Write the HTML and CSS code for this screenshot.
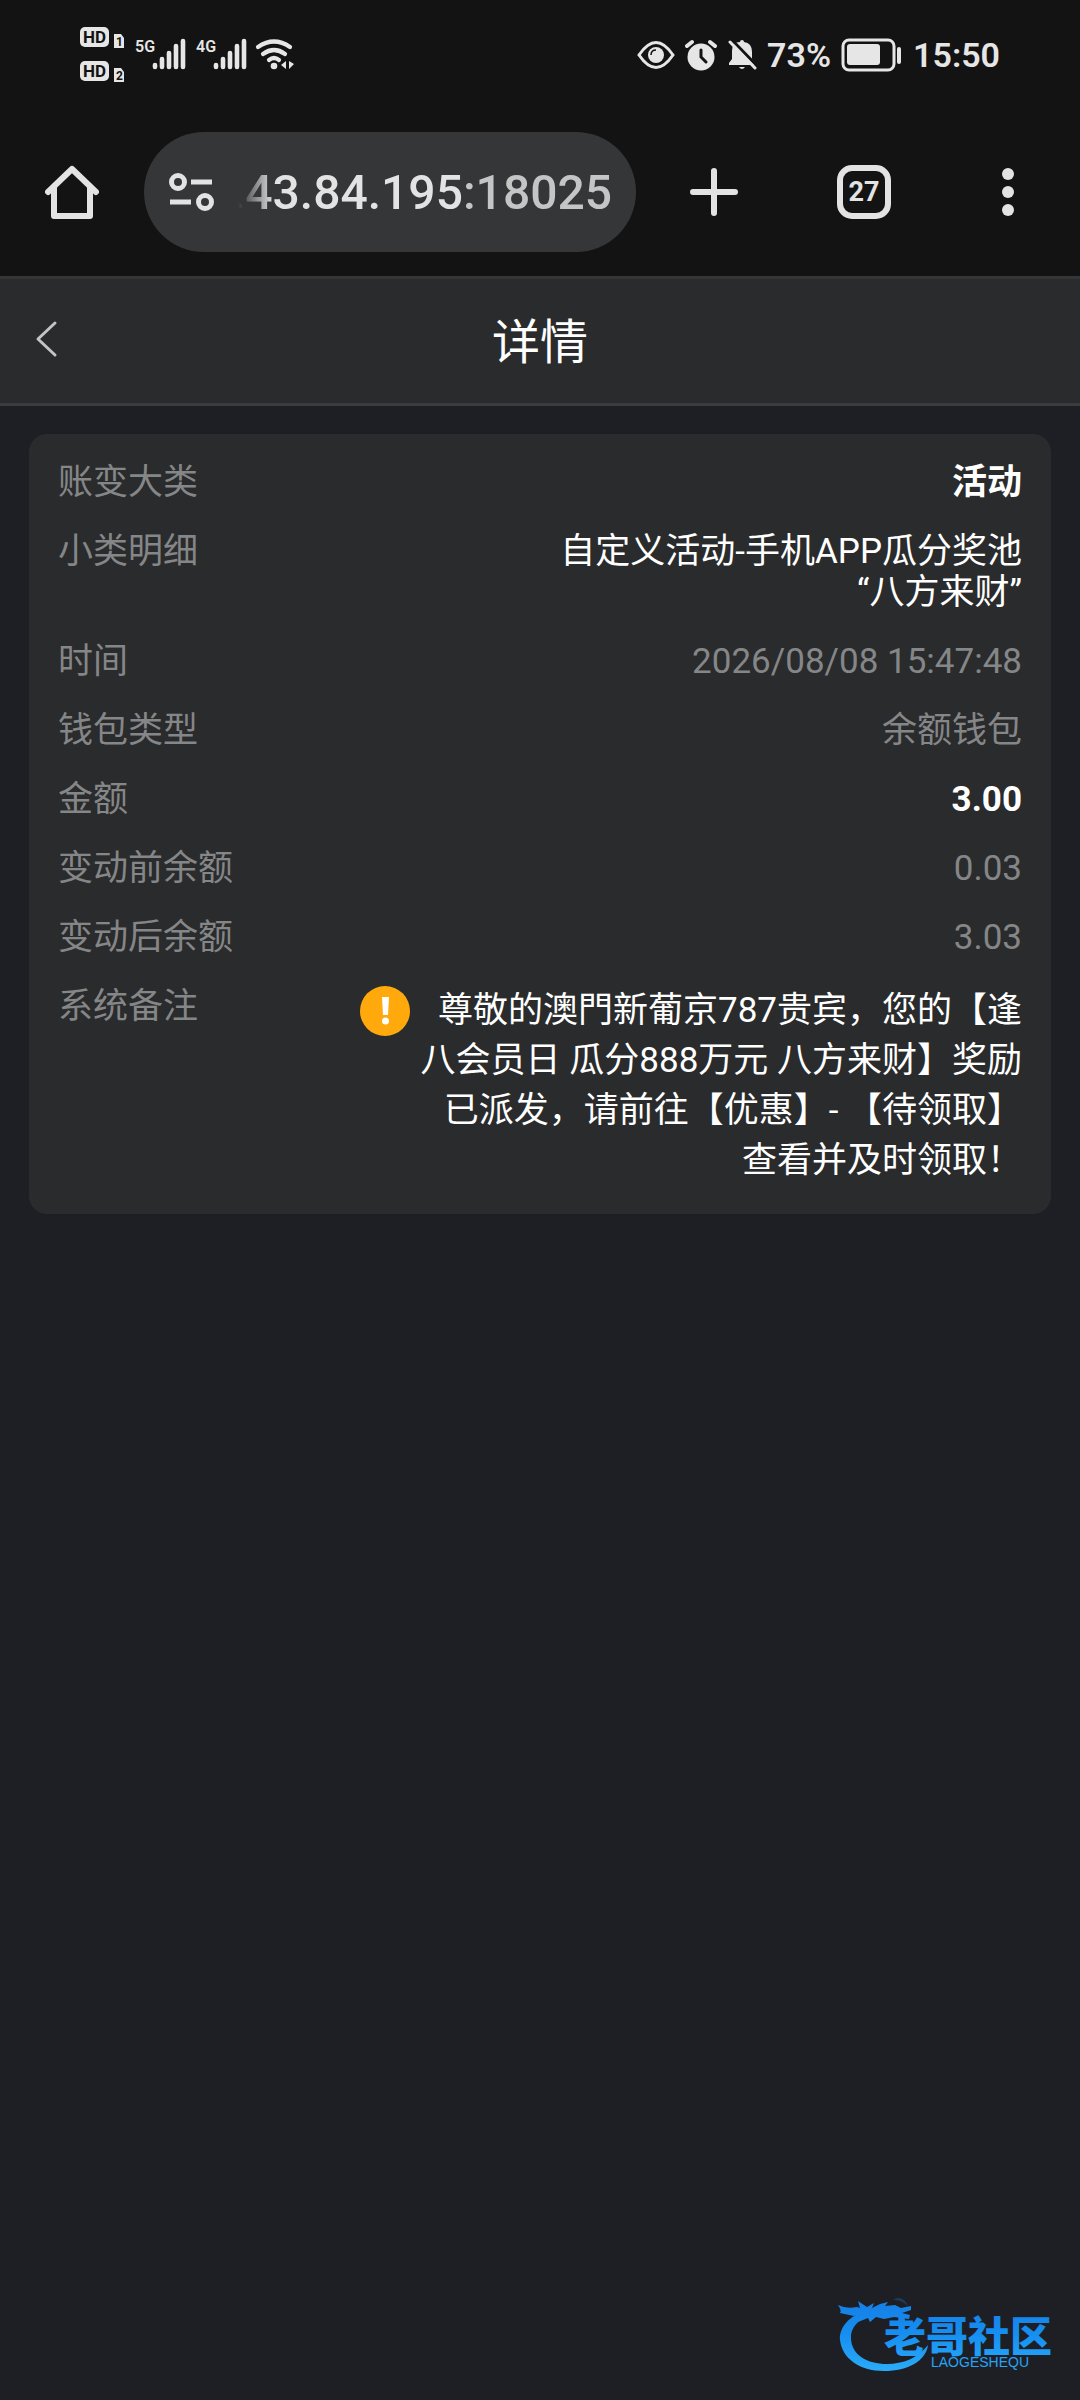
FILE: index.html
```html
<!DOCTYPE html>
<html lang="zh-CN">
<head>
<meta charset="utf-8">
<meta name="viewport" content="width=device-width, initial-scale=1">
<title>详情</title>
<link rel="stylesheet" href="styles.css">
</head>
<body>
<div class="status-bar">
  <svg width="218" height="60" viewBox="78 24 218 60" aria-hidden="true">
    <g fill="#e6e6e6">
      <rect x="80" y="27" width="29" height="20" rx="5"/>
      <rect x="80" y="61" width="29" height="20" rx="5"/>
      <path d="M114 34h7l3 4v10h-10zM114 68h7l3 4v10h-10z"/>
    </g>
    <g class="badge-text">
      <text x="83" y="43">HD</text><text x="83" y="77">HD</text>
    </g>
    <g class="sim-text"><text x="116" y="46">1</text><text x="116" y="80">2</text></g>
    <g class="network-text"><text x="135" y="52">5G</text><text x="196" y="52">4G</text></g>
    <g stroke="#e6e6e6" stroke-width="4.6" stroke-linecap="round">
      <path d="M155 65v2M162 59v8M169 53v14M176 46v21M183 41v26M216 65v2M223 59v8M230 53v14M237 46v21M244 41v26"/>
    </g>
    <g fill="none" stroke="#e6e6e6" stroke-width="4.2" stroke-linecap="round">
      <path d="M258 47q16-11 32 0M263 54q11-8 22 0M269 60q5-4 10 0"/>
    </g>
    <circle cx="274" cy="66" r="3.3" fill="#e6e6e6"/>
    <path d="M286 61v8l-5-4zM289 61v8l5-5z" fill="#e6e6e6"/>
  </svg>
  <div class="status-right">
    <svg width="38" height="34" viewBox="0 0 38 34" aria-hidden="true">
      <path d="M2 17Q19-8 36 17Q19 42 2 17Z" fill="none" stroke="#e6e6e6" stroke-width="3"/>
      <circle cx="19" cy="17" r="8" fill="#e6e6e6"/>
      <path d="M14 17q0-5 5-5" fill="none" stroke="#131313" stroke-width="1.5"/>
    </svg>
    <svg width="32" height="34" viewBox="0 0 32 34" aria-hidden="true">
      <circle cx="16" cy="19" r="13.5" fill="#e6e6e6"/>
      <path d="M2 8l5-4M30 8l-5-4" stroke="#e6e6e6" stroke-width="4" stroke-linecap="round"/>
      <path d="M16 12v7l5 5" fill="none" stroke="#131313" stroke-width="3" stroke-linecap="round"/>
    </svg>
    <svg width="30" height="34" viewBox="0 0 30 34" aria-hidden="true">
      <path d="M2 27v-2l3-4v-8q0-9 8-9 0-2 2-2t2 2q8 1 8 10v7l3 4v2zM12 29h6q-3 4-6 0z" fill="#e6e6e6"/>
      <path d="M5 2l25 26" stroke="#131313" stroke-width="3"/>
      <path d="M3 4l25 26" stroke="#e6e6e6" stroke-width="3" stroke-linecap="round"/>
    </svg>
    <span>73%</span>
    <svg width="62" height="34" viewBox="0 0 62 34" aria-hidden="true">
      <rect x="2" y="2" width="51" height="30" rx="6" fill="none" stroke="#e6e6e6" stroke-width="3"/>
      <rect x="6" y="6" width="33" height="21" rx="3" fill="#e6e6e6"/>
      <rect x="56" y="9" width="4" height="17" rx="2" fill="#e6e6e6"/>
    </svg>
    <span>15:50</span>
  </div>
</div>

<nav class="toolbar">
  <button class="tool" type="button" aria-label="主页">
    <svg width="54" height="54" viewBox="0 0 54 54" fill="none" stroke="#e3e3e3" stroke-width="6" stroke-linecap="round" stroke-linejoin="round"><path d="M3 27L27 4l24 23M9 23v28h36V23"/></svg>
  </button>
  <button class="address" type="button">
    <svg width="46" height="40" viewBox="0 0 46 40" fill="none" stroke="#e3e3e3" stroke-width="5"><circle cx="10" cy="10" r="6.5"/><path d="M23 10h21M2 30h21"/><circle cx="37" cy="30" r="6.5"/></svg>
    <span class="url"><span>.43.84.195<span class="port">:18025</span></span></span>
  </button>
  <button class="tool tool-new" type="button" aria-label="新标签页">
    <svg width="48" height="48" viewBox="0 0 48 48" stroke="#e3e3e3" stroke-width="6" stroke-linecap="round"><path d="M24 3v42M3 24h42"/></svg>
  </button>
  <button class="tool" type="button"><span class="tab-count">27</span></button>
  <button class="tool" type="button" aria-label="更多">
    <svg width="12" height="48" viewBox="0 0 12 48" fill="#e3e3e3"><circle cx="6" cy="6" r="6"/><circle cx="6" cy="24" r="6"/><circle cx="6" cy="42" r="6"/></svg>
  </button>
</nav>

<header class="page-header">
  <button class="back" type="button" aria-label="返回">
    <svg width="24" height="38" viewBox="0 0 24 38" fill="none" stroke="#c4c4c5" stroke-width="3" stroke-linecap="round" stroke-linejoin="round"><path d="M20 3L3 19l17 16"/></svg>
  </button>
  <h1>详情</h1>
</header>

<main>
  <dl class="card">
    <div class="row"><dt>账变大类</dt><dd class="strong">活动</dd></div>
    <div class="row"><dt>小类明细</dt><dd class="bright">自定义活动-手机APP瓜分奖池“八方来财”</dd></div>
    <div class="row"><dt>时间</dt><dd>2026/08/08 15:47:48</dd></div>
    <div class="row"><dt>钱包类型</dt><dd>余额钱包</dd></div>
    <div class="row"><dt>金额</dt><dd class="strong">3.00</dd></div>
    <div class="row"><dt>变动前余额</dt><dd>0.03</dd></div>
    <div class="row"><dt>变动后余额</dt><dd>3.03</dd></div>
    <div class="row">
      <dt>系统备注</dt>
      <dd class="remark">
        <svg width="50" height="50" viewBox="0 0 50 50" aria-hidden="true"><circle cx="25" cy="25" r="25" fill="#ffa90d"/><path d="M22 11h7l-1 18h-5z" fill="#fff"/><circle cx="25.500" cy="35" r="3.500" fill="#fff"/></svg>
        <p>尊敬的澳門新葡京787贵宾，您的【逢八会员日 瓜分888万元 八方来财】奖励已派发，请前往【优惠】- 【待领取】查看并及时领取！</p>
      </dd>
    </div>
  </dl>
</main>

<footer>
  <svg width="226" height="84" viewBox="0 0 226 84" role="img" aria-label="老哥社区 LAOGESHEQU">
    <defs><linearGradient id="blue" gradientUnits="userSpaceOnUse" x1="0" y1="10" x2="0" y2="76"><stop offset="0" stop-color="#1680e6"/><stop offset="0.450" stop-color="#168ef0"/><stop offset="1" stop-color="#2aabf8"/></linearGradient></defs>
    <g fill="url(#blue)">
      <path d="M29 17C11 21 1 34 2 46C4 64 21 77 46 77C70 77 88 67 90 51C80 64 65 70 49 70C29 70 14 61 13 45C12 34 20 25 33 21Z"/>
      <path d="M0 11q8 4 19 2l3 1-2-7 9 6 7-4-2 5 8-4 8-2-3 4 10-1 6 3 10-2v4l-9 3 8 2-1 4-15-2-10 2-8-2-6 5-2-4-10 4 3-8-7 2-14-3Q4 17 0 11Z"/>
      <path d="M55 6q9-6 15 6q-7-7-15-6Z" opacity="0.300"/>
      <text class="logo-name" x="46" y="58">老哥社区</text>
      <text class="logo-latin" x="93" y="73">LAOGESHEQU</text>
    </g>
  </svg>
</footer>
</body>
</html>
```
FILE: styles.css
```css
* {
  box-sizing: border-box;
}

body {
  margin: 0;
  min-height: 100vh;
  display: flex;
  flex-direction: column;
  background: #1e1f24;
  color: #fff;
  font-family: Roboto, "Noto Sans CJK SC", sans-serif;
}

svg {
  display: block;
  flex: none;
}

button {
  border: 0;
  padding: 0;
  background: none;
  color: inherit;
  font: inherit;
}

.status-bar {
  height: 108px;
  padding: 0 80px 0 78px;
  display: flex;
  align-items: center;
  justify-content: space-between;
  background: #131313;
  color: #e6e6e6;
  font-size: 34px;
  font-weight: 600;
}

.badge-text {
  font-size: 17px;
  font-weight: 700;
  fill: #131313;
}

.sim-text {
  font-size: 12px;
  font-weight: 700;
  fill: #131313;
}

.network-text {
  font-size: 16px;
  font-weight: 600;
  fill: #e6e6e6;
}

.status-right {
  padding-top: 1px;
  display: flex;
  align-items: center;
  gap: 10px;
}

.toolbar {
  height: 168px;
  padding: 24px 0;
  display: flex;
  background: #131313;
  color: #e3e3e3;
}

.tool {
  width: 144px;
  display: flex;
  align-items: center;
  justify-content: center;
}

.tool-new {
  width: 156px;
}

.address {
  flex: 1;
  min-width: 0;
  padding: 0 24px;
  display: flex;
  align-items: center;
  gap: 24px;
  border-radius: 60px;
  background: #353638;
  font-size: 48px;
  font-weight: 500;
}

.url {
  flex: 1;
  min-width: 0;
  display: flex;
  justify-content: flex-end;
  overflow: hidden;
  white-space: nowrap;
  mask-image: linear-gradient(to right, transparent, #000 36px);
}

.port {
  color: #c4c5c5;
}

.tab-count {
  width: 54px;
  height: 54px;
  display: flex;
  align-items: center;
  justify-content: center;
  border: 6px solid #e3e3e3;
  border-radius: 15px;
  font-size: 27px;
  font-weight: 700;
}

.page-header {
  height: 130px;
  display: grid;
  grid-template-columns: 96px 1fr 96px;
  align-items: center;
  border-top: 3px solid #353638;
  border-bottom: 3px solid #3b3c3f;
  background: #2a2b2c;
}

.page-header h1 {
  margin: 0;
  padding-top: 4px;
  text-align: center;
  font-size: 48px;
  font-weight: 400;
  line-height: 72px;
}

.back {
  height: 100%;
  padding: 0 0 4px 35px;
  display: flex;
  align-items: center;
}

main {
  padding: 28px 29px;
}

.card {
  margin: 0;
  padding: 28px 29px;
  display: flex;
  flex-direction: column;
  gap: 28px;
  border-radius: 18px;
  background: #2a2b2c;
  color: #858687;
  font-size: 35px;
  line-height: 41px;
}

.row {
  display: flex;
  justify-content: space-between;
}

dt {
  flex: 0 0 302px;
}

dd {
  margin: 0;
  max-width: 50%;
  text-align: right;
}

.strong {
  color: #fff;
  font-weight: 700;
}

.bright {
  color: #fff;
}

.remark {
  flex: 1;
  max-width: none;
  display: flex;
  gap: 8px;
  color: #fff;
  line-height: 50px;
}

.remark p {
  flex: 1;
  margin: 0;
}

footer {
  margin-top: auto;
  padding: 0 16px 22px;
  display: flex;
  justify-content: flex-end;
}

.logo-name {
  font-family: "Noto Sans CJK SC", sans-serif;
  font-size: 42px;
  font-weight: 900;
}

.logo-latin {
  font-family: "Liberation Sans", sans-serif;
  font-size: 14px;
}
```
